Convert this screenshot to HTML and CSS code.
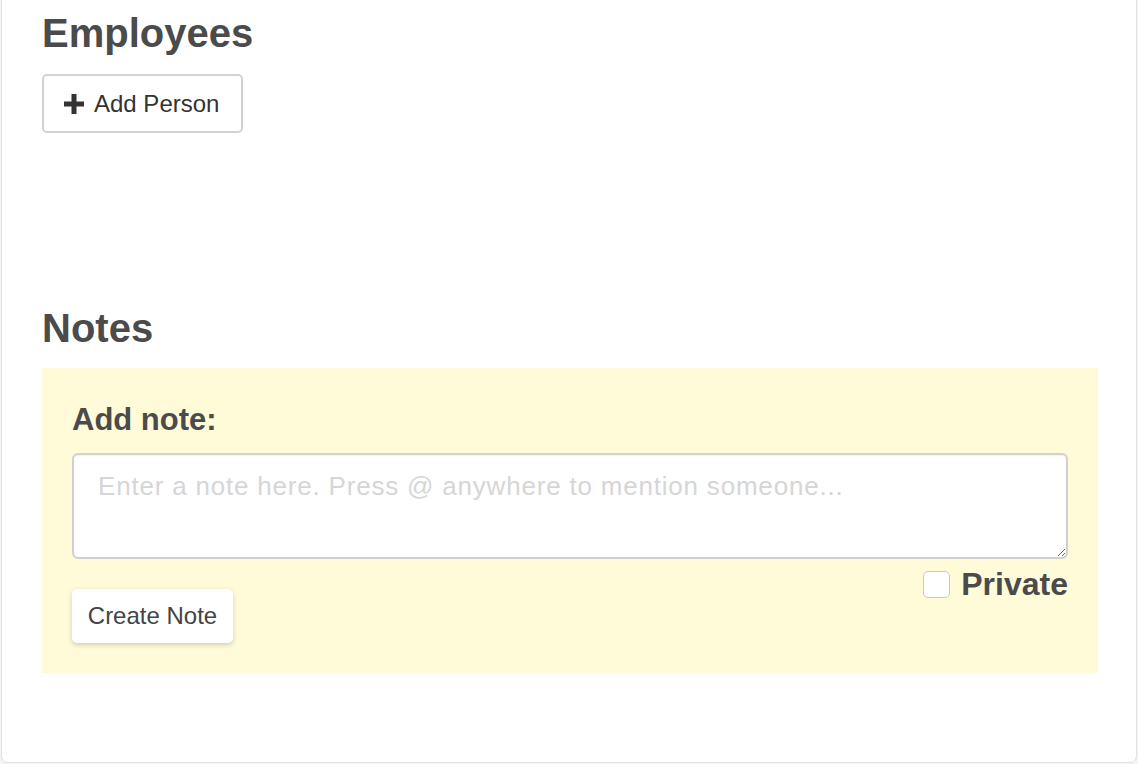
FILE: index.html
```html
<!DOCTYPE html>
<html>
<head>
<meta charset="utf-8">
<link rel="stylesheet" href="styles.css">
</head>
<body>
<div class="card">
  <section class="employees">
    <h1 class="title">Employees</h1>
    <button class="btn-add" type="button">
      <svg class="plus" width="20" height="20" viewBox="0 0 20 20"><path d="M7.5 0h5v7.5H20v5h-7.5V20h-5v-7.5H0v-5h7.5z" fill="#333"/></svg>
      <span>Add Person</span>
    </button>
  </section>
  <section class="notes">
    <h2 class="title">Notes</h2>
    <div class="note-box">
      <label class="note-label" for="note">Add note:</label>
      <textarea id="note" class="note-input" placeholder="Enter a note here. Press @ anywhere to mention someone..."></textarea>
      <div class="note-footer">
        <button class="btn-create" type="button">Create Note</button>
        <label class="private"><input type="checkbox" class="check"><span>Private</span></label>
      </div>
    </div>
  </section>
</div>
</body>
</html>
```
FILE: styles.css
```css
* { box-sizing: border-box; }
html, body { margin: 0; padding: 0; }
body {
  background: #f4f4f4;
  font-family: "Liberation Sans", Arial, sans-serif;
  color: #4b4b4b;
  height: 764px;
  overflow: hidden;
}
.card {
  margin: 0 1px;
  background: #fff;
  border: 1px solid #e2e2e2;
  border-top: none;
  border-radius: 0 0 7px 7px;
  padding: 11px 38px 89px 40px;
}
.title {
  margin: 0;
  font-size: 40px;
  line-height: 44px;
  font-weight: bold;
  color: #4b4b4b;
}
.btn-add {
  margin-top: 19px;
  height: 59px;
  width: 201px;
  display: flex;
  align-items: center;
  gap: 10px;
  padding: 0 0 0 20px;
  background: #fff;
  border: 2px solid #d2d2d2;
  border-radius: 5px;
  font-family: inherit;
  font-size: 24px;
  color: #333;
}
.plus { flex: none; }
.notes { margin-top: 173px; }
.note-box {
  margin-top: 18px;
  background: #fffbd9;
  padding: 34px 30px 30px;
}
.note-label {
  display: block;
  font-size: 31px;
  line-height: 36px;
  font-weight: bold;
  margin-bottom: 15px;
}
.note-input {
  display: block;
  width: 100%;
  height: 106px;
  border: 2px solid #d0d0d0;
  border-radius: 6px;
  padding: 14px 24px;
  font-family: inherit;
  font-size: 26px;
  letter-spacing: 0.8px;
  line-height: 34px;
  color: #333;
  background: #fff;
  box-shadow: inset 0 1px 2px rgba(0,0,0,0.06);
  outline: none;
}
.note-input::placeholder { color: #d6d6d6; }
.note-footer {
  display: flex;
  justify-content: space-between;
  align-items: flex-start;
}
.btn-create {
  margin-top: 30px;
  height: 54px;
  width: 161px;
  background: #fff;
  border: none;
  border-radius: 5px;
  box-shadow: 0 2px 5px rgba(0,0,0,0.18);
  font-family: inherit;
  font-size: 24px;
  color: #444;
  padding: 0;
}
.private {
  margin-top: 10px;
  display: flex;
  align-items: center;
  gap: 11px;
  font-size: 32px;
  line-height: 30px;
  font-weight: bold;
}
.check {
  appearance: none;
  -webkit-appearance: none;
  margin: 0;
  width: 27px;
  height: 27px;
  border: 1px solid #c9c9c9;
  border-radius: 5px;
  background: #fff;
}
```
